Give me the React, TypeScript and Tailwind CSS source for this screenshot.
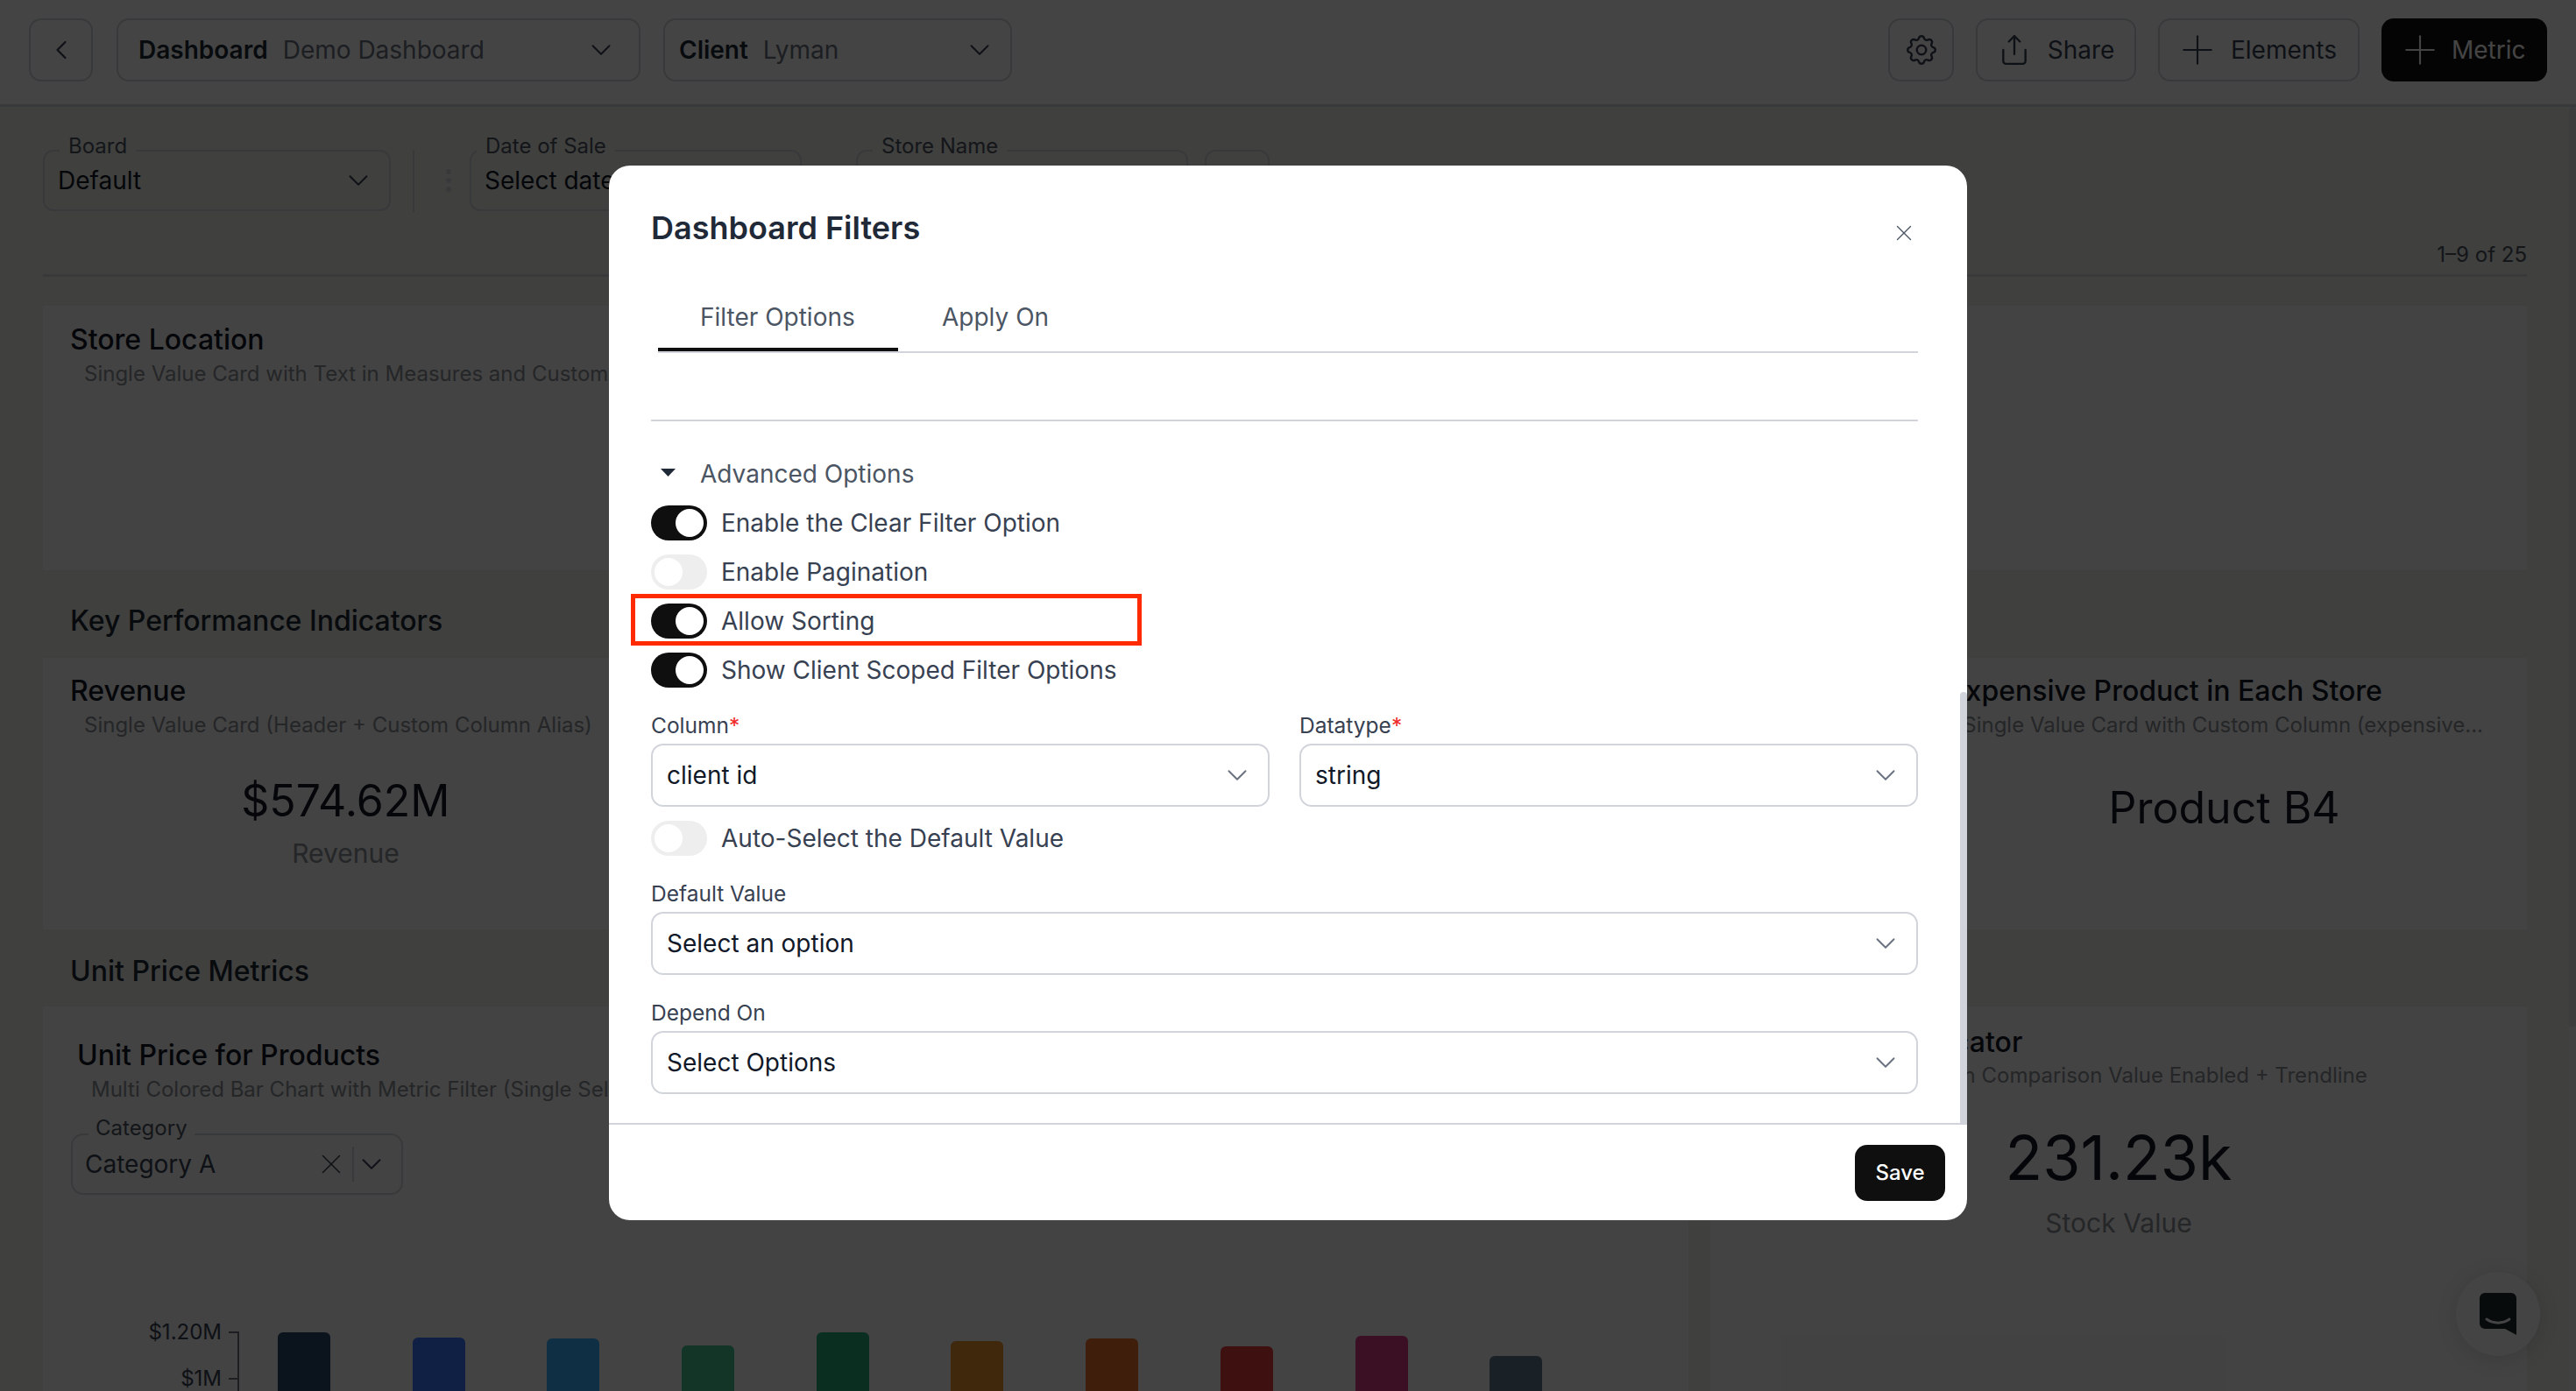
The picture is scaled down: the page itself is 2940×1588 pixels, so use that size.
import { ChevronDown, ChevronLeft, Plus, Share, X } from "lucide-react";
import { TbSettings } from "react-icons/tb";

function Chevron({ color = "text-[#374151]" }: { color?: string }) {
  return <ChevronDown size={38} strokeWidth={1.25} className={`shrink-0 ${color}`} />;
}

function FloatingSelect({ label, value, className, labelLeft }: { label: string; value: string; className: string; labelLeft: string }) {
  return (
    <div className={`relative flex h-[70px] items-center justify-between rounded-[12px] border-2 border-[#d1d5db] pl-[15px] pr-[16px] ${className}`}>
      <span className={`absolute top-[-22px] bg-[#eeeeea] px-[10px] text-[24px] leading-[32px] text-[#4b5563] ${labelLeft}`}>{label}</span>
      <span className="text-[28px] leading-[36px] text-[#111827]">{value}</span>
      <Chevron />
    </div>
  );
}

function Toggle({ on, label, highlight }: { on: boolean; label: string; highlight?: boolean }) {
  return (
    <div className="relative flex h-[40px] items-center gap-[16px]">
      <div className={`flex h-[40px] w-[64px] items-center rounded-full px-[4px] ${on ? "justify-end bg-[#0f0f0f]" : "justify-start bg-[#eeeeee]"}`}>
        <div className="h-[32px] w-[32px] rounded-full bg-white" />
      </div>
      <span className="text-[28px] leading-[40px] text-[#374151]">{label}</span>
      {highlight && <div className="absolute left-[-23px] top-[-11px] h-[59px] w-[583px] border-[5px] border-[#ff2a00]" />}
    </div>
  );
}

function FormSelect({ value }: { value: string }) {
  return (
    <div className="flex h-[72px] items-center justify-between rounded-[14px] border-2 border-[#d1d5db] pl-[16px] pr-[16px]">
      <span className="text-[28px] leading-[36px] text-[#111827]">{value}</span>
      <ChevronDown size={38} strokeWidth={1.25} className="text-[#6b7280]" />
    </div>
  );
}

function FieldLabel({ text, required }: { text: string; required?: boolean }) {
  return (
    <div className="text-[24.5px] leading-[32px] text-[#374151]">
      {text}
      {required && <span className="text-[#ef2b2b]">*</span>}
    </div>
  );
}

const bars = [
  { top: 1522, color: "#2a4d6c" },
  { top: 1528, color: "#3a77fe" },
  { top: 1529, color: "#3ab1fe" },
  { top: 1537, color: "#45c892" },
  { top: 1522, color: "#26b17b" },
  { top: 1532, color: "#eb962a" },
  { top: 1529, color: "#eb732a" },
  { top: 1538, color: "#eb3e3e" },
  { top: 1526, color: "#df3e87" },
  { top: 1549, color: "#647b8e" },
];

function Dashboard() {
  return (
    <div className="flex h-[1588px] flex-col bg-[#eeeeea]">
      <header className="flex h-[122px] shrink-0 items-start border-b-[3px] border-[#d1d5db] bg-white pl-[33px] pr-[33px] pt-[21px]">
        <div className="flex h-[72px] w-[73px] items-center justify-center rounded-[14px] border-2 border-[#d1d5db] text-[#374151]">
          <ChevronLeft size={36} strokeWidth={1.5} />
        </div>
        <div className="ml-[27px] flex h-[72px] w-[598px] items-center justify-between rounded-[14px] border-2 border-[#d1d5db] pl-[23px] pr-[24px]">
          <div className="flex gap-[17px] text-[28px] leading-[36px]">
            <span className="font-semibold text-[#1f2937]">Dashboard</span>
            <span className="text-[#6b7280]">Demo Dashboard</span>
          </div>
          <Chevron />
        </div>
        <div className="ml-[26px] flex h-[72px] w-[398px] items-center justify-between rounded-[14px] border-2 border-[#d1d5db] pl-[16px] pr-[16px]">
          <div className="flex gap-[17px] text-[28px] leading-[36px]">
            <span className="font-semibold text-[#1f2937]">Client</span>
            <span className="text-[#6b7280]">Lyman</span>
          </div>
          <Chevron />
        </div>
        <div className="ml-auto flex gap-[25px]">
          <div className="flex h-[72px] w-[75px] items-center justify-center rounded-[14px] border-2 border-[#d1d5db] text-[#374151]">
            <TbSettings size={42} strokeWidth={1.4} />
          </div>
          <div className="flex h-[72px] w-[183px] items-center justify-center gap-[19px] rounded-[14px] border-2 border-[#d1d5db] text-[#374151]">
            <Share size={38} strokeWidth={1.5} />
            <span className="text-[28px] leading-[36px]">Share</span>
          </div>
          <div className="flex h-[72px] w-[230px] items-center gap-[11px] rounded-[14px] border-2 border-[#d1d5db] pl-[16px] text-[#374151]">
            <Plus size={54} strokeWidth={0.95} />
            <span className="text-[28px] leading-[36px]">Elements</span>
          </div>
          <div className="flex h-[72px] w-[189px] items-center gap-[9px] rounded-[14px] bg-[#0f0f0f] pl-[17px] text-white">
            <Plus size={54} strokeWidth={0.95} />
            <span className="text-[28px] leading-[36px]">Metric</span>
          </div>
        </div>
      </header>

      <div className="flex min-h-0 flex-1">
        <main className="min-w-0 flex-1 pl-[49px] pr-[48px]">
          <div className="flex items-start pt-[49px]">
            <FloatingSelect label="Board" value="Default" labelLeft="left-[17px]" className="w-[397px]" />
            <div className="ml-[25px] h-[71px] w-[2px] bg-[#d1d5db]" />
            <div className="ml-[36px] flex h-[70px] flex-col justify-center gap-[4px]">
              <div className="h-[6px] w-[6px] rounded-full bg-[#d1d5db]" />
              <div className="h-[6px] w-[6px] rounded-full bg-[#d1d5db]" />
              <div className="h-[6px] w-[6px] rounded-full bg-[#d1d5db]" />
            </div>
            <FloatingSelect label="Date of Sale" value="Select date" labelLeft="left-[6px]" className="ml-[21px] w-[379px]" />
            <FloatingSelect label="Store Name" value="" labelLeft="left-[17px]" className="ml-[62px] w-[379px]" />
            <div className="ml-[19px] h-[70px] w-[74px] rounded-[12px] border-2 border-[#d1d5db]" />
          </div>

          <div className="mt-[31px] flex h-[43px] items-start justify-end border-b-[3px] border-[#d1d5db] pt-[2px] text-[24px] leading-[32px] text-[#4b5563]">
            1–9 of 25
          </div>

          <section className="mt-[33px] h-[302px] bg-[#f9f9f9] pl-[31px] pt-[19px]">
            <h3 className="text-[32px] font-medium leading-[40px] text-[#111827]">Store Location</h3>
            <p className="ml-[16px] mt-[3px] text-[24px] leading-[32px] text-[#8b8f96]">Single Value Card with Text in Measures and Custom Column</p>
          </section>

          <h2 className="ml-[31px] mt-[38px] text-[32px] font-medium leading-[40px] text-[#1f2937]">Key Performance Indicators</h2>
          <div className="mt-[22px] grid h-[310px] grid-cols-4 gap-[24px]">
            <section className="bg-[#f9f9f9] pl-[31px] pt-[18px]">
              <h3 className="text-[32px] font-medium leading-[40px] text-[#111827]">Revenue</h3>
              <p className="ml-[16px] mt-[3px] whitespace-nowrap text-[24px] leading-[32px] text-[#8b8f96]">Single Value Card (Header + Custom Column Alias)</p>
              <div className="ml-[-31px] mt-[36px] text-center text-[50px] leading-[68px] text-[#111827]">$574.62M</div>
              <div className="ml-[-31px] mt-[4px] text-center text-[30px] leading-[44px] text-[#8b8f96]">Revenue</div>
            </section>
            <section className="bg-[#f9f9f9]" />
            <section className="bg-[#f9f9f9]" />
            <section className="bg-[#f9f9f9] pl-[31px] pt-[18px]">
              <h3 className="whitespace-nowrap text-[32px] font-medium leading-[40px] text-[#111827]">Expensive Product in Each Store</h3>
              <p className="ml-[16px] mt-[3px] whitespace-nowrap text-[24px] leading-[32px] text-[#8b8f96]">Single Value Card with Custom Column (expensive...</p>
              <div className="ml-[-31px] mt-[44px] text-center text-[50px] leading-[68px] text-[#111827]">Product B4</div>
            </section>
          </div>

          <h2 className="ml-[31px] mt-[28px] text-[32px] font-medium leading-[40px] text-[#1f2937]">Unit Price Metrics</h2>
          <div className="mt-[20px] flex gap-[25px]">
            <section className="h-[460px] w-[1878px] shrink-0 overflow-hidden bg-[#f9f9f9] pl-[32px] pt-[36px]">
              <h3 className="ml-[7px] text-[32px] font-medium leading-[40px] text-[#111827]">Unit Price for Products</h3>
              <p className="ml-[23px] mt-[3px] whitespace-nowrap text-[24px] leading-[32px] text-[#8b8f96]">Multi Colored Bar Chart with Metric Filter (Single Select)</p>
              <div className="relative mt-[34px] flex h-[70px] w-[379px] items-center rounded-[14px] border-2 border-[#d1d5db] pl-[14px] pr-[15px]">
                <span className="absolute left-[18px] top-[-24px] bg-[#f9f9f9] px-[8px] text-[24px] leading-[32px] text-[#4b5563]">Category</span>
                <span className="flex-1 text-[28px] leading-[36px] text-[#374151]">Category A</span>
                <X size={38} strokeWidth={1} className="text-[#374151]" />
                <div className="ml-[5px] mr-[1px] h-[40px] w-[2px] bg-[#d1d5db]" />
                <ChevronDown size={38} strokeWidth={1.25} className="text-[#374151]" />
              </div>
              <div className="mt-[130px] flex h-[112px] items-start">
                <div className="flex w-[190px] flex-col">
                  <div className="flex h-[53px] items-center justify-end text-[24px] text-[#374151]">
                    <span className="mr-[8px]">$1.20M</span>
                    <div className="h-[2px] w-[10px] bg-[#6b7280]" />
                  </div>
                  <div className="flex h-[53px] items-center justify-end text-[24px] text-[#374151]">
                    <span className="mr-[8px]">$1M</span>
                    <div className="h-[2px] w-[10px] bg-[#6b7280]" />
                  </div>
                </div>
                <div className="mt-[26px] h-[86px] w-[2px] bg-[#6b7280]" />
                <div className="ml-[44px] flex h-[112px] items-end gap-[93.7px]">
                  {bars.map((b) => (
                    <div key={b.top + b.color} className="w-[60px] rounded-t-[6px]" style={{ height: 1607 - b.top, background: b.color }} />
                  ))}
                </div>
              </div>
            </section>
            <section className="h-[460px] min-w-0 flex-1 bg-[#f9f9f9] pl-[32px] pt-[21px]">
              <h3 className="text-[32px] font-medium leading-[40px] text-[#111827]">Stock Value Indicator</h3>
              <p className="ml-[16px] mt-[2px] whitespace-nowrap text-[24px] leading-[32px] text-[#8b8f96]">Single Value Card with Comparison Value Enabled + Trendline</p>
              <div className="ml-[-32px] mt-[34px] text-center text-[70px] leading-[88px] text-[#111827]">231.23k</div>
              <div className="ml-[-32px] mt-[8px] text-center text-[30px] leading-[44px] text-[#8b8f96]">Stock Value</div>
            </section>
          </div>
        </main>
        <div className="flex w-[8px] shrink-0 flex-col bg-[#f3f3f3]">
          <div className="h-[1050px] rounded-full bg-[#e0e0e0]" />
        </div>
      </div>
    </div>
  );
}

function Modal() {
  return (
    <div className="flex h-[1204px] w-[1550px] flex-col overflow-hidden rounded-[24px] bg-white">
      <div className="relative min-h-0 flex-1 pl-[48px] pr-[56px] pt-[49px]">
        <h2 className="text-[36px] font-semibold leading-[44px] text-[#1f2937]">Dashboard Filters</h2>
        <X size={30} strokeWidth={1.1} className="absolute left-[1463px] top-[62px] text-[#4b5563]" />

        <div className="ml-[8px] mt-[60px] flex border-b-2 border-[#d1d5db]">
          <div className="w-[274px] border-b-4 border-[#0f0f0f] pb-[15px] pl-[48px] text-[28px] leading-[40px] text-[#4b5563]">Filter Options</div>
          <div className="pl-[50px] text-[28px] leading-[40px] text-[#4b5563]">Apply On</div>
        </div>

        <div className="mt-[76px] h-[2px] bg-[#d1d5db]" />

        <div className="mt-[40px] flex h-[40px] items-center pl-[11px]">
          <svg width="17" height="9" viewBox="0 0 17 9" className="mt-[-3px]">
            <polygon points="0,0 17,0 8.5,9" fill="#1f2937" />
          </svg>
          <span className="ml-[28px] text-[28px] leading-[40px] text-[#4b5563]">Advanced Options</span>
        </div>

        <div className="mt-[16px] flex flex-col gap-[16px]">
          <Toggle on label="Enable the Clear Filter Option" />
          <Toggle on={false} label="Enable Pagination" />
          <Toggle on label="Allow Sorting" highlight />
          <Toggle on label="Show Client Scoped Filter Options" />
        </div>

        <div className="mt-[27px] grid grid-cols-2 gap-[34px]">
          <div className="flex flex-col gap-[5px]">
            <FieldLabel text="Column" required />
            <FormSelect value="client id" />
          </div>
          <div className="flex flex-col gap-[5px]">
            <FieldLabel text="Datatype" required />
            <FormSelect value="string" />
          </div>
        </div>

        <div className="mt-[16px]">
          <Toggle on={false} label="Auto-Select the Default Value" />
        </div>

        <div className="mt-[27px] flex flex-col gap-[5px]">
          <FieldLabel text="Default Value" />
          <FormSelect value="Select an option" />
        </div>
        <div className="mt-[27px] flex flex-col gap-[5px]">
          <FieldLabel text="Depend On" />
          <FormSelect value="Select Options" />
        </div>

        <div className="absolute bottom-0 right-0 h-[492px] w-[8px] rounded-t-full bg-[#d1d5db]" />
      </div>
      <div className="flex h-[111px] shrink-0 items-start justify-end border-t-2 border-[#d1d5db] pr-[25px] pt-[23px]">
        <button className="flex h-[64px] w-[103px] items-center justify-center rounded-[14px] bg-[#0f0f0f] text-[24px] font-medium text-white">Save</button>
      </div>
    </div>
  );
}

export default function App() {
  return (
    <div className="relative h-[1588px] w-[2940px] overflow-hidden bg-white font-[Inter,sans-serif]">
      <Dashboard />
      <div className="absolute bottom-[40px] right-[41px] flex h-[96px] w-[96px] items-center justify-center rounded-full bg-white shadow-[0_4px_24px_rgba(0,0,0,0.12)]">
        <svg width="42" height="48" viewBox="0 0 42 48">
          <path d="M6 0h30a6 6 0 0 1 6 6v42l-13-7H6a6 6 0 0 1-6-6V6a6 6 0 0 1 6-6z" fill="#1f2a2a" />
          <path d="M8 30c8 5.5 18 5.5 26 0" fill="none" stroke="#ffffff" strokeWidth="3" strokeLinecap="round" />
        </svg>
      </div>
      <div className="absolute inset-0 flex justify-center bg-[rgba(0,0,0,0.735)] pt-[189px]">
        <Modal />
      </div>
    </div>
  );
}
